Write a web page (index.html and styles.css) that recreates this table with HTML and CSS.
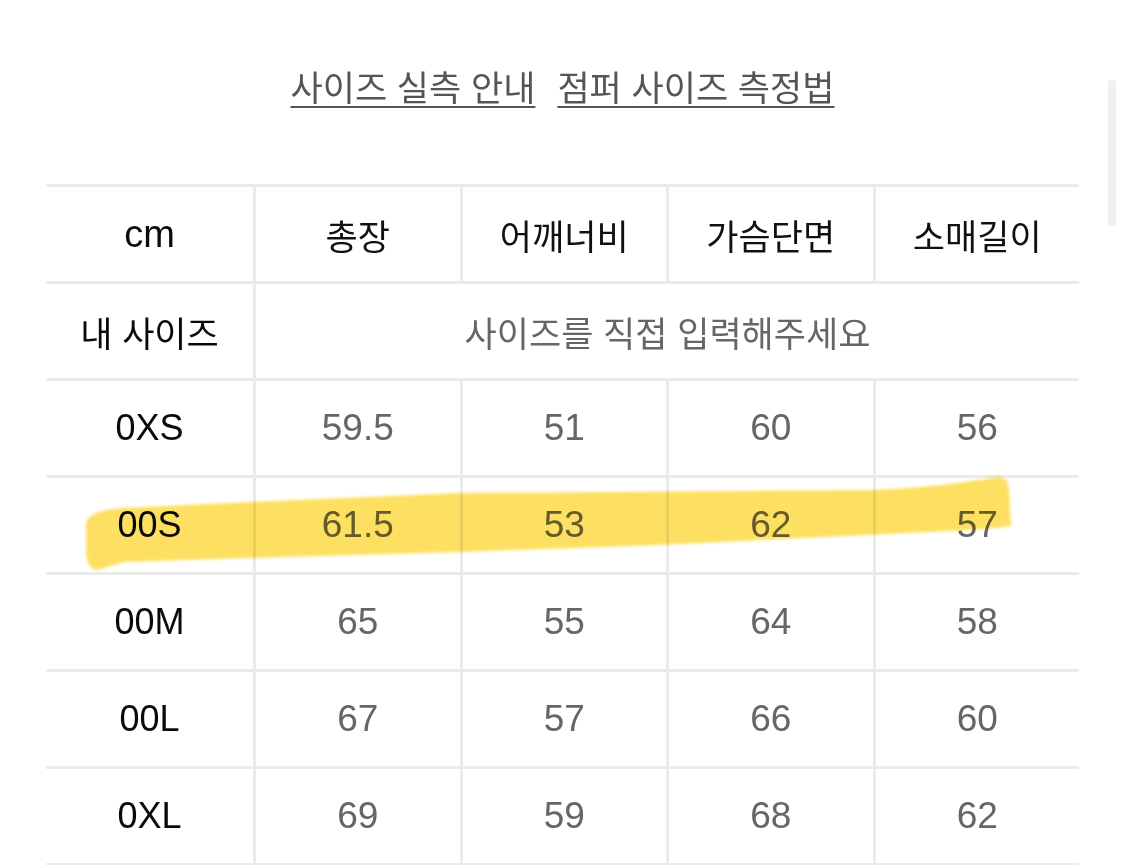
FILE: index.html
```html
<!DOCTYPE html>
<html lang="ko">
<head>
<meta charset="utf-8">
<title>사이즈 실측 안내</title>
<link rel="stylesheet" href="styles.css">
</head>
<body>
<div class="page">
  <nav class="guide-links">
    <a class="guide-link" href="#">사이즈 실측 안내</a>
    <a class="guide-link" href="#">점퍼 사이즈 측정법</a>
  </nav>
  <table class="size-table">
    <thead>
      <tr>
        <th class="label unit">cm</th>
        <th class="ko">총장</th>
        <th class="ko">어깨너비</th>
        <th class="ko">가슴단면</th>
        <th class="ko">소매길이</th>
      </tr>
    </thead>
    <tbody>
      <tr>
        <td class="label ko">내 사이즈</td>
        <td class="placeholder ko" colspan="4">사이즈를 직접 입력해주세요</td>
      </tr>
      <tr><td class="label">0XS</td><td>59.5</td><td>51</td><td>60</td><td>56</td></tr>
      <tr><td class="label">00S</td><td>61.5</td><td>53</td><td>62</td><td>57</td></tr>
      <tr><td class="label">00M</td><td>65</td><td>55</td><td>64</td><td>58</td></tr>
      <tr><td class="label">00L</td><td>67</td><td>57</td><td>66</td><td>60</td></tr>
      <tr><td class="label">0XL</td><td>69</td><td>59</td><td>68</td><td>62</td></tr>
    </tbody>
  </table>
  <svg class="highlight" width="1125" height="865" viewBox="0 0 1125 865" aria-hidden="true">
    <defs>
      <filter id="soft" x="-5%" y="-50%" width="110%" height="200%">
        <feGaussianBlur stdDeviation="1.6"/>
      </filter>
    </defs>
    <path filter="url(#soft)" fill="#fde062" d="M86,524 C88,514 100,510 122,508 L250,502 L460,493 L870,490 C930,488 965,482 998,477 C1006,477 1008,481 1009,490 L1011,526 C990,529 970,530 950,531 L660,545 L460,552 L250,558 L125,562 C112,565 104,569 96,570 C88,568 86,560 86,548 Z"/>
  </svg>
  <div class="scrollbar"></div>
</div>
</body>
</html>
```

FILE: styles.css
```css
html, body {
  margin: 0;
  padding: 0;
  background: #ffffff;
}

body {
  font-family: "Liberation Sans", "Noto Sans CJK KR", sans-serif;
  color: #111111;
  overflow: hidden;
}

.page {
  position: relative;
  width: 1125px;
  height: 865px;
}

.guide-links {
  display: flex;
  justify-content: center;
  gap: 22px;
  padding-top: 68px;
  height: 120px;
  box-sizing: border-box;
}

.guide-link {
  font-size: 35px;
  line-height: 42px;
  color: #555555;
  text-decoration: underline;
  text-decoration-thickness: 2px;
  text-underline-offset: 5px;
}

.size-table {
  margin: 64px 0 0 46px;
  width: 1033px;
  border-collapse: separate;
  border-spacing: 0;
  table-layout: fixed;
}

.size-table th,
.size-table td {
  height: 94px;
  padding: 0;
  text-align: center;
  vertical-align: middle;
  border-bottom: 3px solid #ebebeb;
  border-left: 3px solid #ebebeb;
  font-size: 37px;
  font-weight: normal;
  color: #666666;
}

.size-table thead th {
  border-top: 3px solid #ebebeb;
  color: #111111;
}

.size-table .label {
  border-left: none;
  color: #0a0a0a;
  width: 207px;
  font-size: 36px;
}

.size-table .unit {
  font-size: 38px;
}

.size-table .ko {
  font-size: 35px;
}

.size-table .placeholder {
  color: #666666;
}

.highlight {
  position: absolute;
  top: 0;
  left: 0;
  pointer-events: none;
  mix-blend-mode: multiply;
}

.scrollbar {
  position: absolute;
  top: 80px;
  left: 1108px;
  width: 8px;
  height: 146px;
  border-radius: 4px;
  background: #f0f0f0;
}
```
